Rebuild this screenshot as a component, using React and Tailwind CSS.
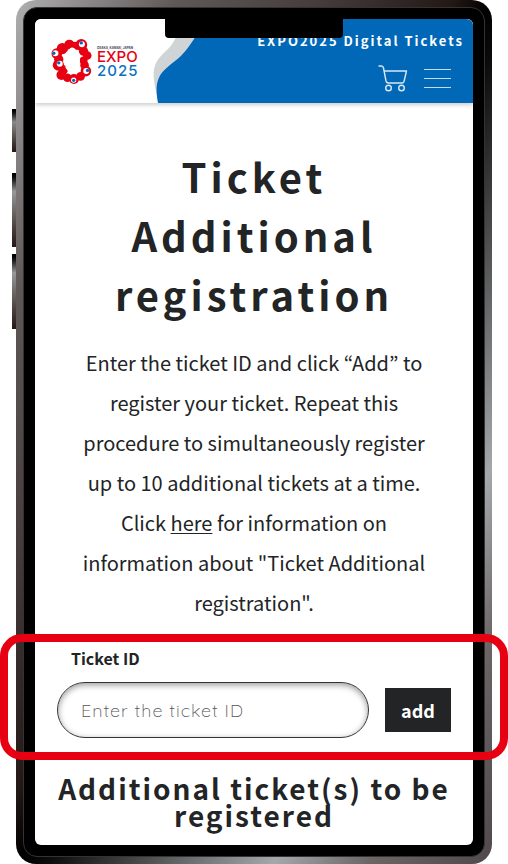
const blobs = [
  [88, 42, 15], [104, 46, 13], [124, 43, 18], [131, 62, 14], [142, 75, 13], [131, 90, 12],
  [134, 104, 13], [138, 122, 16], [122, 138, 13], [102, 146, 15], [82, 142, 13],
  [64, 134, 15], [70, 118, 14], [55, 104, 17], [56, 86, 14], [50, 69, 16], [67, 54, 17],
];

const eyes = [
  [126, 41, 9, 124, 37], [46, 68, 9, 41, 68], [59, 100, 9, 56, 97],
  [139, 122, 9, 143, 120], [101, 149, 8, 101, 150],
];

function ExpoLogo() {
  return (
    <a href="#top" aria-label="EXPO 2025" className="flex items-center gap-1">
      <svg viewBox="33 22 126 142" className="h-[47px] w-[42px]" aria-hidden="true">
        {blobs.map(([x, y, r]) => (
          <circle key={`${x}-${y}`} cx={x} cy={y} r={r} fill="#e60012" />
        ))}
        <path d="M88 55 Q98 46 107 57 Q117 62 116 75 Q123 88 118 99 Q121 112 113 119 Q108 130 97 127 Q84 131 82 119 Q73 111 77 100 Q70 88 76 78 Q74 64 84 62 Z" fill="#fff" />
        {eyes.map(([x, y, r, px, py]) => (
          <g key={`${x}-${y}`}>
            <circle cx={x} cy={y} r={r} fill="#fff" />
            <circle cx={px} cy={py} r="5" fill="#0068b7" />
          </g>
        ))}
      </svg>
      <span className="flex flex-col font-['Inter','Liberation_Sans',sans-serif]">
        <span className="text-[3px] leading-[4px] font-bold whitespace-nowrap text-gray-700">OSAKA, KANSAI, JAPAN</span>
        <span className="text-[15px] leading-[14px] font-medium text-[#e60012]">EXPO</span>
        <span className="text-[15px] leading-[13px] font-medium tracking-[1px] text-[#0a72bf]">2025</span>
      </span>
    </a>
  );
}

function Header() {
  return (
    <header className="relative z-10 flex h-[84px] rounded-t-md bg-white shadow-[0_2px_4px_rgba(0,0,0,0.2)]">
      <div className="flex w-[118px] shrink-0 items-center pl-4">
        <ExpoLogo />
      </div>
      <svg viewBox="0 0 50 84" className="h-[84px] w-[50px] shrink-0" aria-hidden="true">
        <path d="M26 0 C26 9 24 17 21 22 C17 30 9 34 4 42 C-1 51 0 61 4 76 L20 70 L50 20 V0 Z" fill="#cfd4d7" />
        <path d="M46 0 C45 9 44 15 41 20 C35 29 31 35 22 42 C12 50 6 54 4 65 C3 72 4 78 5 84 H51 V0 Z" fill="#0068b7" />
      </svg>
      <div className="flex min-w-0 flex-1 flex-col items-end rounded-tr-md bg-[#0068b7] text-white">
        <p className="mt-3 mr-[9px] text-[13px] leading-[20px] font-bold tracking-[2px] whitespace-nowrap">EXPO2025 Digital Tickets</p>
        <div className="mt-[13px] mr-[22px] flex items-center gap-4">
          <button type="button" aria-label="Cart" className="block">
            <svg viewBox="0 0 30 28" className="h-7 w-[30px]" fill="none" stroke="#d9e8f4" strokeWidth="1.4" strokeLinecap="round" strokeLinejoin="round">
              <path d="M1 2 H3.5 Q5 2 5.5 4 L8 17 Q8.500 19 10.500 19 H24 Q25.500 19 26 17.500 L28.500 7 H6.500" />
              <circle cx="10.500" cy="24" r="2.800" />
              <circle cx="23.500" cy="24" r="2.800" />
            </svg>
          </button>
          <button type="button" aria-label="Menu" className="flex w-[27px] flex-col gap-2">
            <span className="h-px w-full bg-[#c5daec]" />
            <span className="h-px w-full bg-[#c5daec]" />
            <span className="h-px w-full bg-[#c5daec]" />
          </button>
        </div>
      </div>
    </header>
  );
}

function TicketForm() {
  return (
    <form className="relative px-[22px] pt-3 pb-[22px]" onSubmit={(e) => e.preventDefault()}>
      <label htmlFor="ticket-id" className="ml-[14px] block text-[16px] leading-[24px] font-bold">Ticket ID</label>
      <div className="mt-3 flex items-center gap-4">
        <input
          id="ticket-id"
          type="text"
          placeholder="Enter the ticket ID"
          className="h-14 w-full min-w-0 flex-1 rounded-full border border-[#333] bg-white px-[23px] font-['Quicksand','Lato',sans-serif] text-[18px] font-light tracking-[1px] shadow-[inset_0_2px_6px_rgba(0,0,0,0.4)] placeholder:text-[#555]"
        />
        <button type="submit" className="h-11 w-[66px] shrink-0 bg-[#222425] text-[18px] leading-[24px] font-bold text-white">add</button>
      </div>
      <div className="pointer-events-none absolute -inset-x-[35px] inset-y-0 z-20 rounded-[22px] border-8 border-[#e60012]" aria-hidden="true" />
    </form>
  );
}

export default function App() {
  return (
    <div className="overflow-hidden bg-white font-['Noto_Sans_CJK_JP',sans-serif] text-[#222425]">
      <div className="relative mx-4 rounded-[20px] bg-[linear-gradient(to_bottom_right,#b0b0b0_0%,#5f5758_17%,#463c3e_32%,#231815_46%,#000_50%,#0a0a0a_53%,#444_62%,#a5a8ab_77%,#6b6566_87%,#50484a_100%)] p-[7px]">
        <span className="absolute top-[109px] -left-1 h-[43px] w-1 bg-linear-to-b from-black via-[#8a8a8a] via-30% to-[#231815]" />
        <span className="absolute top-[173px] -left-1 h-[74px] w-1 bg-linear-to-b from-black via-[#999] via-25% to-[#231815]" />
        <span className="absolute top-[254px] -left-1 h-[75px] w-1 bg-linear-to-b from-black via-[#999] via-25% to-[#231815]" />
        <div className="relative rounded-[14px] border border-[#333] bg-black p-[11px]">
          <div className="absolute top-[11px] left-[141px] z-20 h-[19px] w-[178px] rounded-b bg-black" />
          <div className="rounded-md bg-white">
            <Header />
            <main className="text-center">
              <div className="px-10 pt-11 pb-[11px]">
                <h1 className="text-[40px] leading-[59px] font-bold tracking-[4px]">Ticket Additional registration</h1>
                <p className="mt-[19px] text-[20px] leading-[40px]">
                  Enter the ticket ID and click “Add” to register your ticket. Repeat this procedure to simultaneously register up to 10 additional tickets at a time. Click <a href="#information" className="underline decoration-1 underline-offset-2">here</a> for information on information about "Ticket Additional registration".
                </p>
              </div>
              <div className="text-left">
                <TicketForm />
              </div>
              <h2 className="px-5 pt-[15px] pb-4 text-[28px] leading-[27px] font-bold tracking-[2px]">Additional ticket(s) to be registered</h2>
            </main>
          </div>
        </div>
      </div>
    </div>
  );
}
